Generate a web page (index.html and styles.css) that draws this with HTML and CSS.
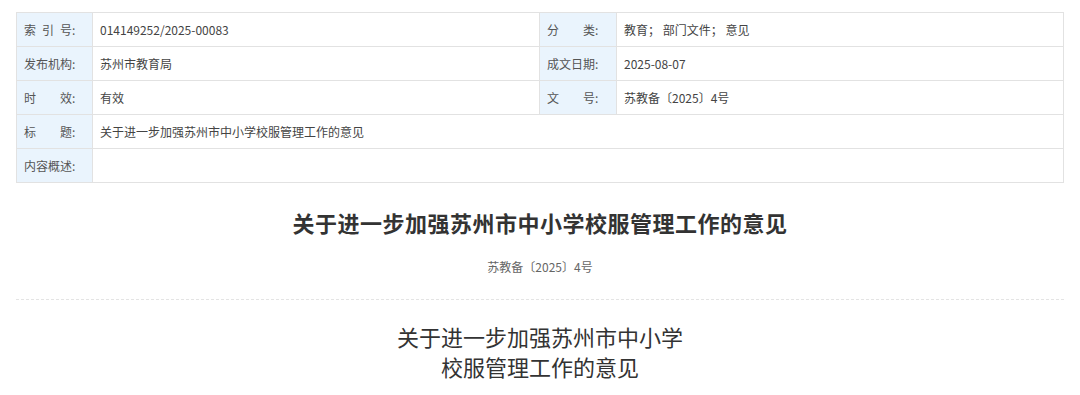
FILE: index.html
```html
<!DOCTYPE html>
<html lang="zh-CN">
<head>
<meta charset="utf-8">
<title>关于进一步加强苏州市中小学校服管理工作的意见</title>
<link rel="stylesheet" href="styles.css">
</head>
<body>
<div class="page">
  <table class="meta">
    <colgroup>
      <col class="c-label1">
      <col class="c-val1">
      <col class="c-label2">
      <col>
    </colgroup>
    <tr>
      <th>索&ensp;引&ensp;号:</th>
      <td>014149252/2025-00083</td>
      <th>分　　类:</th>
      <td>教育；&nbsp;部门文件；&nbsp;意见</td>
    </tr>
    <tr>
      <th>发布机构:</th>
      <td>苏州市教育局</td>
      <th>成文日期:</th>
      <td>2025-08-07</td>
    </tr>
    <tr>
      <th>时　　效:</th>
      <td>有效</td>
      <th>文　　号:</th>
      <td>苏教备〔2025〕4号</td>
    </tr>
    <tr>
      <th>标　　题:</th>
      <td colspan="3">关于进一步加强苏州市中小学校服管理工作的意见</td>
    </tr>
    <tr>
      <th>内容概述:</th>
      <td colspan="3"></td>
    </tr>
  </table>

  <h1 class="title">关于进一步加强苏州市中小学校服管理工作的意见</h1>
  <div class="docno">苏教备〔2025〕4号</div>
  <div class="divider"></div>
  <div class="body-title">关于进一步加强苏州市中小学<br>校服管理工作的意见</div>
</div>
</body>
</html>
```

FILE: styles.css
```css
html, body {
  margin: 0;
  padding: 0;
  background: #ffffff;
}
body {
  font-family: "Noto Sans CJK SC", "Noto Sans", sans-serif;
  color: #333333;
}
.page {
  padding: 12px 16px 0 16px;
}
.meta {
  width: 1048px;
  border-collapse: collapse;
  table-layout: fixed;
  font-size: 12px;
}
.c-label1 { width: 76px; }
.c-val1 { width: 447px; }
.c-label2 { width: 77px; }
.meta th,
.meta td {
  border: 1px solid #e2e2e2;
  height: 33px;
  padding: 0 7px;
  text-align: left;
  vertical-align: middle;
  font-weight: normal;
  white-space: nowrap;
  line-height: 16px;
}
.meta th {
  background: #eaf4fd;
  color: #555555;
}
.meta td {
  color: #444444;
}
.title {
  margin: 24px 0 0 0;
  font-size: 22px;
  line-height: 30px;
  font-weight: bold;
  text-align: center;
  color: #333333;
  letter-spacing: 0.5px;
}
.docno {
  margin-top: 20px;
  font-size: 12px;
  line-height: 20px;
  text-align: center;
  color: #666666;
}
.divider {
  margin-top: 22px;
  border-top: 1px dashed #e4e4e4;
}
.body-title {
  margin-top: 21px;
  font-size: 22px;
  line-height: 30px;
  text-align: center;
  color: #333333;
}
```
